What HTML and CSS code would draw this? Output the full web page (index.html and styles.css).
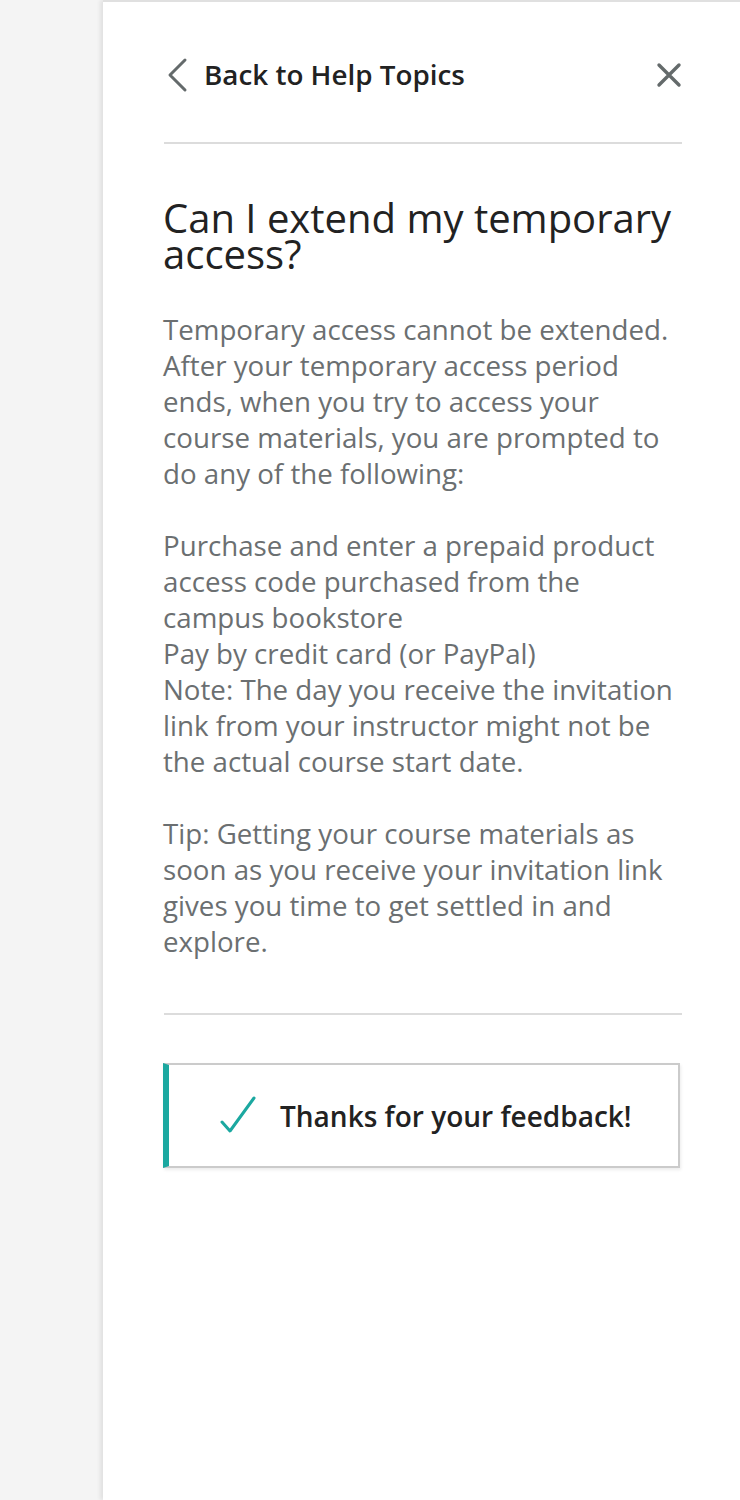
FILE: index.html
```html
<!DOCTYPE html>
<html lang="en">
<head>
<meta charset="utf-8">
<title>Help</title>
<link rel="stylesheet" href="styles.css">
</head>
<body>
<div class="page">
  <aside class="panel">
    <header class="panel-header">
      <a class="back-link" href="#">
        <svg class="chevron" width="26" height="36" viewBox="0 0 26 36" aria-hidden="true">
          <path d="M21 3 L6 18 L21 33" fill="none" stroke="#646a6b" stroke-width="3" stroke-linecap="round" stroke-linejoin="round"/>
        </svg>
        <span>Back to Help Topics</span>
      </a>
      <button class="close" aria-label="Close">
        <svg width="26" height="26" viewBox="0 0 26 26" aria-hidden="true">
          <path d="M3 3 L23 23 M23 3 L3 23" fill="none" stroke="#646a6b" stroke-width="3.4" stroke-linecap="round"/>
        </svg>
      </button>
    </header>
    <hr class="divider">
    <article class="article">
      <h1 class="title">Can I extend my temporary access?</h1>
      <p>Temporary access cannot be extended. After your temporary access period ends, when you try to access your course materials, you are prompted to do any of the following:</p>
      <p>Purchase and enter a prepaid product access code purchased from the campus bookstore<br>Pay by credit card (or PayPal)<br>Note: The day you receive the invitation link from your instructor might not be the actual course start date.</p>
      <p>Tip: Getting your course materials as soon as you receive your invitation link gives you time to get settled in and explore.</p>
    </article>
    <hr class="divider">
    <div class="feedback">
      <svg class="check" width="40" height="40" viewBox="0 0 40 40" aria-hidden="true">
        <path d="M3 26 L11 35 L35 2" fill="none" stroke="#1ba8a0" stroke-width="3" stroke-linecap="round" stroke-linejoin="round"/>
      </svg>
      <span class="feedback-text">Thanks for your feedback!</span>
    </div>
  </aside>
</div>
</body>
</html>
```
FILE: styles.css
```css
html, body {
  margin: 0;
  padding: 0;
}
body {
  background: #f4f4f4;
  font-family: "Open Sans", "Noto Sans", sans-serif;
}
.page {
  display: flex;
  justify-content: flex-end;
  min-height: 1500px;
}
.panel {
  width: 637px;
  min-height: 1500px;
  box-sizing: border-box;
  background: #fff;
  border-top: 2px solid #e0e0e0;
  box-shadow: -3px 0 4px rgba(0,0,0,0.08);
  padding: 48px 58px 0 60px;
}
.panel-header {
  display: flex;
  align-items: center;
  justify-content: space-between;
  height: 50px;
}
.back-link {
  display: flex;
  align-items: center;
  gap: 14px;
  text-decoration: none;
  color: #222;
  font-size: 27.8px;
  font-weight: 600;
}
.back-link span {
  position: relative;
  top: -1px;
}
.chevron {
  margin-left: 1px;
}
.close {
  border: 0;
  background: none;
  padding: 0;
  width: 26px;
  height: 26px;
  display: flex;
}
.divider {
  border: 0;
  height: 2px;
  background: #dcdcdc;
  margin: 42px 0 0 1px;
}
.article {
  padding-top: 56px;
  padding-bottom: 12px;
}
.title {
  margin: 0;
  font-size: 40px;
  font-weight: 400;
  line-height: 36px;
  color: #222;
}
.article p {
  margin: 36px 0 0;
  font-size: 27.7px;
  line-height: 36px;
  color: #6b6f71;
}
.article .title + p {
  margin-top: 39px;
}
.feedback {
  margin-top: 48px;
  margin-right: 2px;
  height: 105px;
  box-sizing: border-box;
  border: 2px solid #cbcbcb;
  border-left: 6px solid #1ba8a0;
  box-shadow: 1px 2px 3px rgba(0,0,0,0.08);
  display: flex;
  align-items: center;
  padding-left: 50px;
  gap: 21px;
}
.feedback-text {
  font-size: 28px;
  font-weight: 600;
  color: #222;
}
```
